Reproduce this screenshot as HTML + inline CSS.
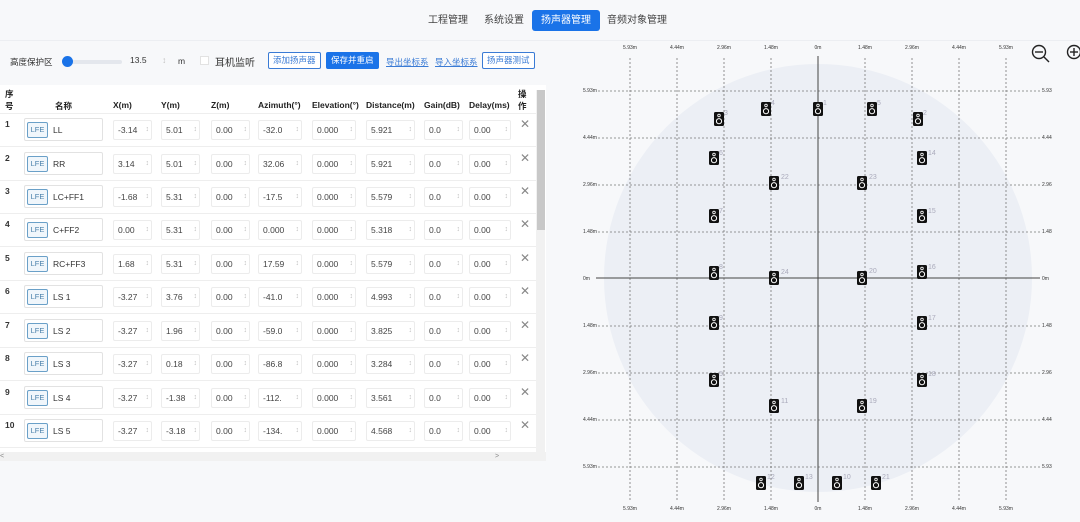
<!DOCTYPE html>
<html><head><meta charset="utf-8"><style>
*{box-sizing:border-box;margin:0;padding:0}
body{width:1080px;height:522px;overflow:hidden;background:#f7f8fa;font-family:"Liberation Sans","Noto Sans CJK SC",sans-serif;font-size:9px;color:#333;position:relative}
.abs{position:absolute}
.nav{position:absolute;top:10px;font-size:10px;color:#444;height:21px;line-height:21px}
.btn{position:absolute;top:52px;height:17px;line-height:15px;font-size:8.5px;border:1px solid #3a7bd5;color:#3a7bd5;border-radius:2px;padding:0 4px;background:#fff}
.lnk{position:absolute;top:56px;font-size:8.5px;color:#3a7bd5;text-decoration:underline}
.panel{position:absolute;left:0;top:85px;width:546px;height:367px;background:#fff}
.hd{position:absolute;top:100px;font-weight:bold;font-size:8.5px;color:#222}
.row{position:absolute;left:0;width:536px;height:34px;border-bottom:1px solid #eee}
.row .n{position:absolute;left:5px;top:6px;font-weight:bold;font-size:8.5px}
.nm{position:absolute;left:24px;top:5px;width:79px;height:23px;border:1px solid #e2e2e2;border-radius:2px}
.lfe{position:absolute;left:2px;top:3px;width:21px;height:16px;border:1px solid #6aa0c8;border-radius:2px;color:#4a80aa;font-size:7.5px;text-align:center;line-height:14px;background:#f0f6fb}
.nt{position:absolute;left:28px;top:6px;font-size:8.5px}
.in{position:absolute;top:7px;height:20px;border:1px solid #ececec;border-radius:2px;font-size:8.5px;line-height:18px;padding-left:4px;background:#fff;color:#444}
.in:after{content:"\2195";position:absolute;right:2px;top:0;color:#bbb;font-size:7px}
.x{position:absolute;left:520px;top:4px;font-size:12px;color:#888}
</style></head><body>
<div class="abs" style="left:0;top:40px;width:1080px;height:1px;background:#eceef2"></div>
<div class="nav" style="left:428px">工程管理</div>
<div class="nav" style="left:484px">系统设置</div>
<div class="nav" style="left:532px;background:#1a73e8;color:#fff;border-radius:3px;padding:0 9px">扬声器管理</div>
<div class="nav" style="left:607px">音频对象管理</div>

<div class="abs" style="left:10px;top:56px;font-size:8.5px">高度保护区</div>
<div class="abs" style="left:62px;top:60px;width:60px;height:4px;background:#e4e7ed;border-radius:2px"></div>
<div class="abs" style="left:62px;top:56px;width:11px;height:11px;background:#1a73e8;border-radius:50%"></div>
<div class="abs" style="left:124px;top:52px;width:50px;height:17px;font-size:8.5px;line-height:17px;padding-left:6px">13.5<span style="position:absolute;left:38px;color:#bbb">↕</span></div>
<div class="abs" style="left:178px;top:56px;font-size:8.5px">m</div>
<div class="abs" style="left:200px;top:56px;width:9px;height:9px;border:1px solid #e2e2e2;background:#fff"></div>
<div class="abs" style="left:215px;top:54px;font-size:10px">耳机监听</div>
<div class="btn" style="left:268px">添加扬声器</div>
<div class="btn" style="left:326px;background:#1a73e8;color:#fff;border-color:#1a73e8">保存并重启</div>
<div class="lnk" style="left:386px">导出坐标系</div>
<div class="lnk" style="left:435px">导入坐标系</div>
<div class="btn" style="left:482px">扬声器测试</div>

<div class="panel"></div>
<div class="abs" style="left:536px;top:90px;width:9px;height:362px;background:#f1f1f1"></div>
<div class="abs" style="left:537px;top:90px;width:8px;height:140px;background:#c8c8c8"></div>
<div class="abs" style="left:0;top:452px;width:546px;height:9px;background:#f1f1f1;font-size:7px;color:#888;line-height:9px">&lt;<span style="position:absolute;left:495px">&gt;</span></div>
<div class="hd" style="left:5px;top:88px">序<br>号</div>
<div class="hd" style="left:55px">名称</div>
<div class="hd" style="left:113px">X(m)</div>
<div class="hd" style="left:161px">Y(m)</div>
<div class="hd" style="left:211px">Z(m)</div>
<div class="hd" style="left:258px">Azimuth(°)</div>
<div class="hd" style="left:312px">Elevation(°)</div>
<div class="hd" style="left:366px">Distance(m)</div>
<div class="hd" style="left:424px">Gain(dB)</div>
<div class="hd" style="left:469px">Delay(ms)</div>
<div class="hd" style="left:518px;top:88px">操<br>作</div>
<div class="abs" style="left:0;top:113px;width:536px;height:1px;background:#eee"></div>

<div class="row" style="top:113px"><span class="n">1</span><div class="nm"><div class="lfe">LFE</div><span class="nt">LL</span></div><div class="in" style="left:113px;width:39px">-3.14</div><div class="in" style="left:161px;width:39px">5.01</div><div class="in" style="left:211px;width:39px">0.00</div><div class="in" style="left:258px;width:44px">-32.0</div><div class="in" style="left:312px;width:44px">0.000</div><div class="in" style="left:366px;width:49px">5.921</div><div class="in" style="left:424px;width:39px">0.0</div><div class="in" style="left:469px;width:42px">0.00</div><span class="x">✕</span></div>
<div class="row" style="top:147px"><span class="n">2</span><div class="nm"><div class="lfe">LFE</div><span class="nt">RR</span></div><div class="in" style="left:113px;width:39px">3.14</div><div class="in" style="left:161px;width:39px">5.01</div><div class="in" style="left:211px;width:39px">0.00</div><div class="in" style="left:258px;width:44px">32.06</div><div class="in" style="left:312px;width:44px">0.000</div><div class="in" style="left:366px;width:49px">5.921</div><div class="in" style="left:424px;width:39px">0.0</div><div class="in" style="left:469px;width:42px">0.00</div><span class="x">✕</span></div>
<div class="row" style="top:180px"><span class="n">3</span><div class="nm"><div class="lfe">LFE</div><span class="nt">LC+FF1</span></div><div class="in" style="left:113px;width:39px">-1.68</div><div class="in" style="left:161px;width:39px">5.31</div><div class="in" style="left:211px;width:39px">0.00</div><div class="in" style="left:258px;width:44px">-17.5</div><div class="in" style="left:312px;width:44px">0.000</div><div class="in" style="left:366px;width:49px">5.579</div><div class="in" style="left:424px;width:39px">0.0</div><div class="in" style="left:469px;width:42px">0.00</div><span class="x">✕</span></div>
<div class="row" style="top:213px"><span class="n">4</span><div class="nm"><div class="lfe">LFE</div><span class="nt">C+FF2</span></div><div class="in" style="left:113px;width:39px">0.00</div><div class="in" style="left:161px;width:39px">5.31</div><div class="in" style="left:211px;width:39px">0.00</div><div class="in" style="left:258px;width:44px">0.000</div><div class="in" style="left:312px;width:44px">0.000</div><div class="in" style="left:366px;width:49px">5.318</div><div class="in" style="left:424px;width:39px">0.0</div><div class="in" style="left:469px;width:42px">0.00</div><span class="x">✕</span></div>
<div class="row" style="top:247px"><span class="n">5</span><div class="nm"><div class="lfe">LFE</div><span class="nt">RC+FF3</span></div><div class="in" style="left:113px;width:39px">1.68</div><div class="in" style="left:161px;width:39px">5.31</div><div class="in" style="left:211px;width:39px">0.00</div><div class="in" style="left:258px;width:44px">17.59</div><div class="in" style="left:312px;width:44px">0.000</div><div class="in" style="left:366px;width:49px">5.579</div><div class="in" style="left:424px;width:39px">0.0</div><div class="in" style="left:469px;width:42px">0.00</div><span class="x">✕</span></div>
<div class="row" style="top:280px"><span class="n">6</span><div class="nm"><div class="lfe">LFE</div><span class="nt">LS 1</span></div><div class="in" style="left:113px;width:39px">-3.27</div><div class="in" style="left:161px;width:39px">3.76</div><div class="in" style="left:211px;width:39px">0.00</div><div class="in" style="left:258px;width:44px">-41.0</div><div class="in" style="left:312px;width:44px">0.000</div><div class="in" style="left:366px;width:49px">4.993</div><div class="in" style="left:424px;width:39px">0.0</div><div class="in" style="left:469px;width:42px">0.00</div><span class="x">✕</span></div>
<div class="row" style="top:314px"><span class="n">7</span><div class="nm"><div class="lfe">LFE</div><span class="nt">LS 2</span></div><div class="in" style="left:113px;width:39px">-3.27</div><div class="in" style="left:161px;width:39px">1.96</div><div class="in" style="left:211px;width:39px">0.00</div><div class="in" style="left:258px;width:44px">-59.0</div><div class="in" style="left:312px;width:44px">0.000</div><div class="in" style="left:366px;width:49px">3.825</div><div class="in" style="left:424px;width:39px">0.0</div><div class="in" style="left:469px;width:42px">0.00</div><span class="x">✕</span></div>
<div class="row" style="top:347px"><span class="n">8</span><div class="nm"><div class="lfe">LFE</div><span class="nt">LS 3</span></div><div class="in" style="left:113px;width:39px">-3.27</div><div class="in" style="left:161px;width:39px">0.18</div><div class="in" style="left:211px;width:39px">0.00</div><div class="in" style="left:258px;width:44px">-86.8</div><div class="in" style="left:312px;width:44px">0.000</div><div class="in" style="left:366px;width:49px">3.284</div><div class="in" style="left:424px;width:39px">0.0</div><div class="in" style="left:469px;width:42px">0.00</div><span class="x">✕</span></div>
<div class="row" style="top:381px"><span class="n">9</span><div class="nm"><div class="lfe">LFE</div><span class="nt">LS 4</span></div><div class="in" style="left:113px;width:39px">-3.27</div><div class="in" style="left:161px;width:39px">-1.38</div><div class="in" style="left:211px;width:39px">0.00</div><div class="in" style="left:258px;width:44px">-112.</div><div class="in" style="left:312px;width:44px">0.000</div><div class="in" style="left:366px;width:49px">3.561</div><div class="in" style="left:424px;width:39px">0.0</div><div class="in" style="left:469px;width:42px">0.00</div><span class="x">✕</span></div>
<div class="row" style="top:414px"><span class="n">10</span><div class="nm"><div class="lfe">LFE</div><span class="nt">LS 5</span></div><div class="in" style="left:113px;width:39px">-3.27</div><div class="in" style="left:161px;width:39px">-3.18</div><div class="in" style="left:211px;width:39px">0.00</div><div class="in" style="left:258px;width:44px">-134.</div><div class="in" style="left:312px;width:44px">0.000</div><div class="in" style="left:366px;width:49px">4.568</div><div class="in" style="left:424px;width:39px">0.0</div><div class="in" style="left:469px;width:42px">0.00</div><span class="x">✕</span></div>

<svg class="abs" style="left:0;top:0" width="1080" height="522" viewBox="0 0 1080 522">
<defs>
<g id="sp"><rect x="-5" y="-7" width="10" height="14" rx="1.5" fill="#111"/><circle cx="0" cy="-3.5" r="1.3" fill="none" stroke="#fff" stroke-width="0.8"/><circle cx="0" cy="2.2" r="2.6" fill="none" stroke="#fff" stroke-width="1"/></g>
</defs>
<circle cx="818" cy="278" r="214" fill="#eceff5"/>
<g stroke="#777" stroke-width="0.8" stroke-dasharray="2,2">
<line x1="630" y1="58" x2="630" y2="500"/><line x1="677" y1="58" x2="677" y2="500"/><line x1="724" y1="58" x2="724" y2="500"/><line x1="771" y1="58" x2="771" y2="500"/><line x1="865" y1="58" x2="865" y2="500"/><line x1="912" y1="58" x2="912" y2="500"/><line x1="959" y1="58" x2="959" y2="500"/><line x1="1006" y1="58" x2="1006" y2="500"/>
<line x1="598" y1="91" x2="1040" y2="91"/><line x1="598" y1="138" x2="1040" y2="138"/><line x1="598" y1="185" x2="1040" y2="185"/><line x1="598" y1="232" x2="1040" y2="232"/><line x1="598" y1="326" x2="1040" y2="326"/><line x1="598" y1="373" x2="1040" y2="373"/><line x1="598" y1="420" x2="1040" y2="420"/><line x1="598" y1="467" x2="1040" y2="467"/>
</g>
<line x1="818" y1="56" x2="818" y2="502" stroke="#444" stroke-width="1"/>
<line x1="596" y1="278" x2="1040" y2="278" stroke="#444" stroke-width="1"/>
<g font-size="5" fill="#333" text-anchor="middle" font-family="Liberation Sans">
<text x="630" y="49">5.93m</text><text x="677" y="49">4.44m</text><text x="724" y="49">2.96m</text><text x="771" y="49">1.48m</text><text x="818" y="49">0m</text><text x="865" y="49">1.48m</text><text x="912" y="49">2.96m</text><text x="959" y="49">4.44m</text><text x="1006" y="49">5.93m</text>
<text x="630" y="510">5.93m</text><text x="677" y="510">4.44m</text><text x="724" y="510">2.96m</text><text x="771" y="510">1.48m</text><text x="818" y="510">0m</text><text x="865" y="510">1.48m</text><text x="912" y="510">2.96m</text><text x="959" y="510">4.44m</text><text x="1006" y="510">5.93m</text>
</g>
<g font-size="5" fill="#333" font-family="Liberation Sans">
<text x="583" y="92">5.93m</text><text x="583" y="139">4.44m</text><text x="583" y="186">2.96m</text><text x="583" y="233">1.48m</text><text x="583" y="280">0m</text><text x="583" y="327">1.48m</text><text x="583" y="374">2.96m</text><text x="583" y="421">4.44m</text><text x="583" y="468">5.93m</text>
<text x="1042" y="92">5.93</text><text x="1042" y="139">4.44</text><text x="1042" y="186">2.96</text><text x="1042" y="233">1.48</text><text x="1042" y="280">0m</text><text x="1042" y="327">1.48</text><text x="1042" y="374">2.96</text><text x="1042" y="421">4.44</text><text x="1042" y="468">5.93</text>
</g>
<use href="#sp" x="719" y="119"/><use href="#sp" x="766" y="109"/><use href="#sp" x="818" y="109"/><use href="#sp" x="872" y="109"/><use href="#sp" x="918" y="119"/>
<use href="#sp" x="714" y="158"/><use href="#sp" x="922" y="158"/>
<use href="#sp" x="774" y="183"/><use href="#sp" x="862" y="183"/>
<use href="#sp" x="714" y="216"/><use href="#sp" x="922" y="216"/>
<use href="#sp" x="714" y="273"/><use href="#sp" x="774" y="278"/><use href="#sp" x="862" y="278"/><use href="#sp" x="922" y="272"/>
<use href="#sp" x="714" y="323"/><use href="#sp" x="922" y="323"/>
<use href="#sp" x="714" y="380"/><use href="#sp" x="922" y="380"/>
<use href="#sp" x="774" y="406"/><use href="#sp" x="862" y="406"/>
<use href="#sp" x="761" y="483"/><use href="#sp" x="799" y="483"/><use href="#sp" x="837" y="483"/><use href="#sp" x="876" y="483"/>
<g font-size="7" fill="#aab" font-family="Liberation Sans">
<text x="724" y="115">3</text><text x="771" y="105">4</text><text x="823" y="105">1</text><text x="877" y="105">5</text><text x="923" y="115">2</text>
<text x="719" y="155">6</text><text x="719" y="213">7</text><text x="719" y="269">8</text><text x="719" y="320">9</text><text x="719" y="376">5</text>
<text x="781" y="179">22</text><text x="869" y="179">23</text><text x="928" y="155">14</text><text x="928" y="213">15</text><text x="781" y="274">24</text><text x="869" y="273">20</text><text x="928" y="269">16</text><text x="928" y="320">17</text><text x="928" y="376">18</text><text x="781" y="403">11</text><text x="869" y="403">19</text><text x="767" y="479">12</text><text x="805" y="479">13</text><text x="843" y="479">10</text><text x="882" y="479">21</text>
</g>
<g fill="none" stroke="#222" stroke-width="1.4">
<circle cx="1039" cy="52" r="6.5"/><line x1="1035" y1="52" x2="1043" y2="52"/><line x1="1044" y1="57" x2="1049" y2="62"/>
<circle cx="1074" cy="52" r="6.5"/><line x1="1070" y1="52" x2="1078" y2="52"/><line x1="1074" y1="48" x2="1074" y2="56"/>
</g>
</svg>
</body></html>
